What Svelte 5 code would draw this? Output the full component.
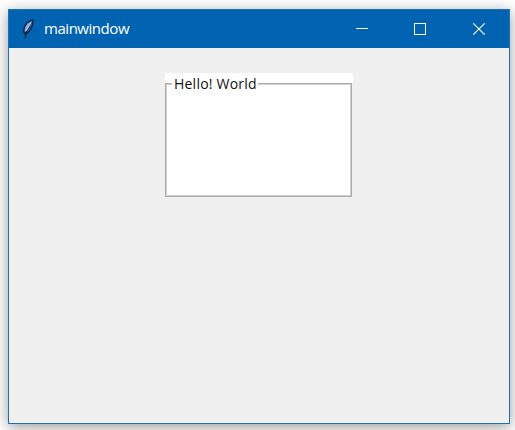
<script>
  const title = 'mainwindow';
  const label = 'Hello! World';
</script>

<div class="desktop">
  <div class="window">
    <header>
      <svg class="feather" width="14" height="22" viewBox="0 0 14 22">
        <path d="M12.600 1.500C9 1.500 4.500 4.500 3 8.500c-.8 2.500-.9 5-.3 7.300l1.200.7-.1 3.500 1.200-.1.3-3.500C8.500 14.800 11 10.800 11.900 7c.4-2.200 1-3.500.7-5.500z" fill="#0b1c33" />
        <path d="M11.600 2.800C7.500 4 4.700 6.800 3.900 10c-.4 1.700-.4 3.300-.1 4.800L7.500 10z" fill="#7ba9df" />
        <path d="M11.500 3 5.800 14.500c2.400-1.800 4.500-4.900 5.100-8.500z" fill="#4678b8" />
        <path d="M9.500 5C7.800 7.500 6.500 9.500 5.300 13" fill="none" stroke="#c6dcf2" stroke-width=".8" />
        <path d="M9.200 8.300 7.500 11.500" fill="none" stroke="#17304f" stroke-width=".8" />
      </svg>
      <span class="title">{title}</span>
      <div class="controls">
        <svg width="58" height="38" viewBox="0 0 58 38" shape-rendering="crispEdges">
          <path d="M23 18h12v1H23z" fill="#fff" />
        </svg>
        <svg width="58" height="38" viewBox="0 0 58 38" shape-rendering="crispEdges">
          <rect x="23.5" y="13.5" width="11" height="11" fill="none" stroke="#fff" />
        </svg>
        <svg width="58" height="38" viewBox="0 0 58 38">
          <path d="M24.300 13.300l11.400 11.400M35.700 13.300l-11.400 11.400" fill="none" stroke="#fff" stroke-width="1.200" />
        </svg>
      </div>
    </header>
    <main>
      <div class="labelframe">
        <div class="groove"><span>{label}</span></div>
      </div>
    </main>
  </div>
</div>

<style>
  .desktop {
    box-sizing: border-box;
    width: 515px;
    height: 430px;
    padding: 9px 5px 6px 8px;
    overflow: hidden;
    background: #fff;
  }
  .window {
    box-sizing: border-box;
    display: flex;
    flex-direction: column;
    width: 502px;
    height: 415px;
    border: 1px solid #1874b9;
    background: #f0f0f0;
    box-shadow: 0 3px 14px rgba(0, 0, 0, 0.4);
  }
  header {
    display: flex;
    align-items: center;
    height: 38px;
    background: #0063b1;
  }
  .feather {
    margin-left: 12px;
    margin-right: 9px;
  }
  .title {
    padding-bottom: 2px;
    color: #fff;
    font: 15px/20px 'Open Sans', 'Noto Sans', sans-serif;
    letter-spacing: -0.46px;
  }
  .controls {
    display: flex;
    height: 38px;
    margin-left: auto;
    margin-right: 2px;
  }
  main {
    display: flex;
    justify-content: center;
    padding-top: 25px;
  }
  .labelframe {
    box-sizing: border-box;
    width: 188px;
    height: 124px;
    padding-top: 10px;
    padding-right: 1px;
    background: linear-gradient(#fff, #fff) no-repeat 0 0 / 188px 10px;
  }
  .groove {
    box-sizing: border-box;
    width: 187px;
    height: 114px;
    border: 1px solid #acacac;
    background: #fff;
    box-shadow: inset 0 0 0 1px #d0d0d0;
  }
  .groove span {
    display: block;
    width: max-content;
    height: 18px;
    margin: -9px 0 0 6px;
    padding: 0 1px 0 2px;
    background: #fff;
    color: #111;
    font: 14px/18px 'Open Sans', 'Noto Sans', sans-serif;
    letter-spacing: 0.22px;
  }
</style>
